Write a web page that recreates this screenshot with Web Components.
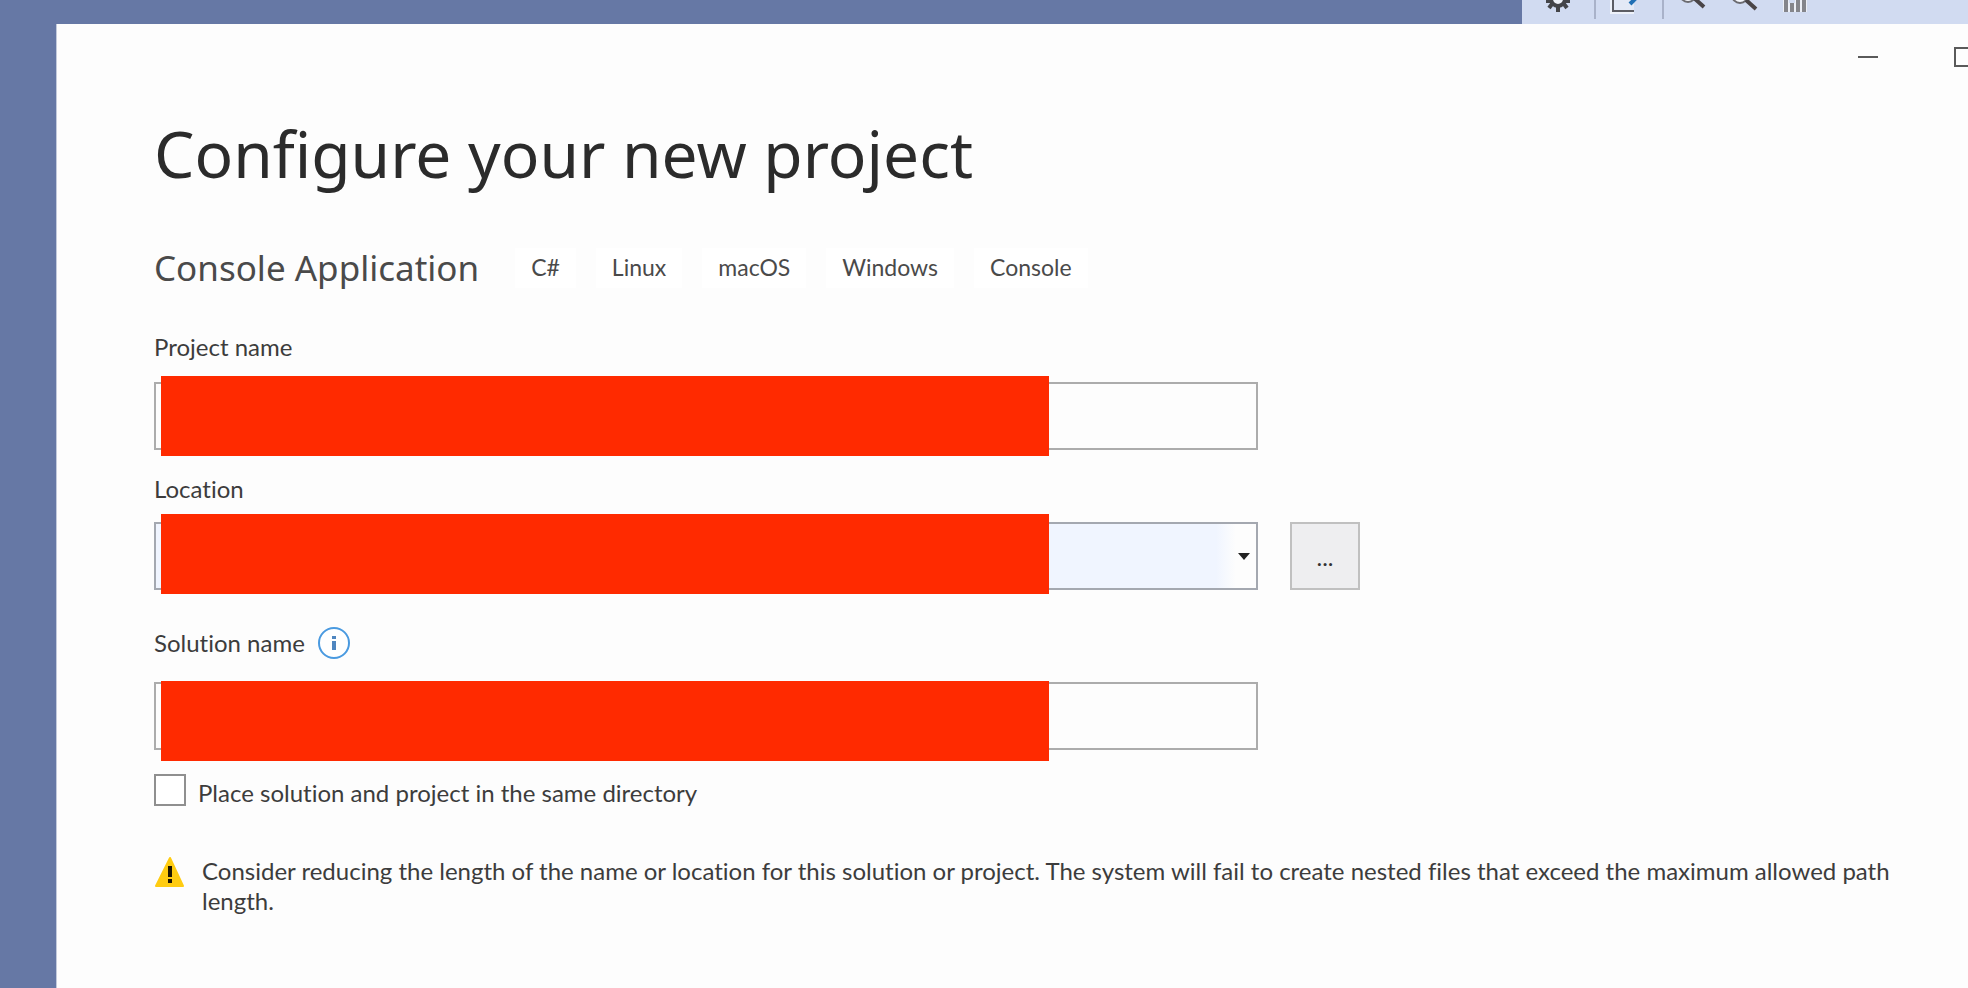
<!DOCTYPE html>
<html lang="en">
<head>
<meta charset="utf-8">
<title>Configure your new project</title>
<style>
  html, body { margin: 0; min-height: 100%; }
  body { background: #6678a5; font-family: Lato, "Noto Sans", sans-serif; font-variant-ligatures: none; color: #2b2b2b; overflow: hidden; }
</style>
</head>
<body>
<ide-shell>
  <ide-toolbar slot="toolbar"></ide-toolbar>
  <project-dialog>
    <dialog-caption slot="caption"></dialog-caption>
    <span slot="title">Configure your new project</span>
    <template-summary>
      <span slot="name">Console Application</span>
      <tag-chip>C#</tag-chip>
      <tag-chip>Linux</tag-chip>
      <tag-chip>macOS</tag-chip>
      <tag-chip>Windows</tag-chip>
      <tag-chip>Console</tag-chip>
    </template-summary>
    <name-field label="Project name" style="--before:39px;--gap:19px;--lift:6px"></name-field>
    <location-field label="Location" style="--before:23px;--gap:17px;--lift:8px"></location-field>
    <name-field label="Solution name" info style="--before:37px;--gap:23px;--lift:1px"></name-field>
    <check-option>Place solution and project in the same directory</check-option>
    <warning-note>Consider reducing the length of the name or location for this solution or project. The system will fail to create nested files that exceed the maximum allowed path length.</warning-note>
  </project-dialog>
</ide-shell>

<script>
const define = (name, html, setup) => customElements.define(name, class extends HTMLElement {
  constructor() {
    super();
    this.attachShadow({ mode: 'open' }).innerHTML = html;
  }
  connectedCallback() { if (setup) setup(this, this.shadowRoot); }
});

define('ide-shell', `
  <style>
    :host { display: flex; flex-direction: column; min-height: 100vh; }
    header { display: flex; justify-content: flex-end; height: 24px; }
    main { flex: 1; display: flex; padding-left: 56px; }
  </style>
  <header><slot name="toolbar"></slot></header>
  <main><slot></slot></main>`);

define('ide-toolbar', `
  <style>
    :host { display: block; width: 446px; height: 24px; background: #d1dbf1; }
    svg { display: block; }
  </style>
  <svg width="446" height="24" viewBox="0 0 446 24" role="img" aria-label="Toolbar">
    <g fill="none" stroke="#444549">
      <circle cx="36" cy="-1" r="7" fill="#eef1f8" stroke-width="4"/>
      <path d="M36 7V12M30 4L27 8M42 4L45 8M28 1H24M44 1H48" stroke-width="4"/>
    </g>
    <path d="M73 0V19M141 0V19" stroke="#a9b2c9" stroke-width="2"/>
    <path d="M91 0V11H112" fill="none" stroke="#eef2fa" stroke-width="6"/>
    <path d="M92 0V10H112V0Z" fill="#e3e9f6"/>
    <path d="M91 0V11H112" fill="none" stroke="#5c5d64" stroke-width="2"/>
    <path d="M108 4L116 -4" stroke="#1f6fb5" stroke-width="4"/>
    <g fill="none">
      <circle cx="166" cy="-6" r="8" fill="#f5f7fc" stroke="#6b6b70" stroke-width="2"/>
      <path d="M172 -2L182 7" stroke="#4a4547" stroke-width="4"/>
      <circle cx="218" cy="-5" r="8" fill="#f5f7fc" stroke="#6b6b70" stroke-width="2"/>
      <path d="M224 0L234 9" stroke="#4a4547" stroke-width="4"/>
    </g>
    <path d="M264 0V12M270 3V12M276 0V12M282 0V12" stroke="#eceff6" stroke-width="6"/>
    <path d="M264 0V12M270 3V12M276 0V12M282 0V12" stroke="#84858b" stroke-width="4"/>
  </svg>`);

define('project-dialog', `
  <style>
    :host { flex: 1; min-width: 0; display: block; background: #fdfdfd; border-left: 1px solid #c3cadc; overflow: hidden; }
    h1 { margin: 20px 0 46px; font-family: "Noto Sans", sans-serif; font-size: 64px; line-height: 88px; font-weight: 400; color: #2b2b2b; }
    section { padding: 0 40px 0 97px; }
  </style>
  <slot name="caption"></slot>
  <section>
    <h1><slot name="title"></slot></h1>
    <slot></slot>
  </section>`);

define('dialog-caption', `
  <style>
    :host { display: flex; justify-content: flex-end; height: 66px; margin-right: -44px; }
    button { width: 96px; border: 0; padding: 0; background: none; display: grid; place-items: center; }
    path, rect { fill: none; stroke: #5a5a5a; stroke-width: 2; }
  </style>
  <button type="button" aria-label="Minimize"><svg width="20" height="20"><path d="M0 10H20"/></svg></button>
  <button type="button" aria-label="Maximize"><svg width="20" height="20"><rect x="1" y="1" width="18" height="18"/></svg></button>`);

define('template-summary', `
  <style>
    :host { display: flex; align-items: center; gap: 20px; height: 48px; }
    h2 { margin: 0 16px 0 0; font-family: "Noto Sans", sans-serif; font-size: 35px; line-height: 48px; font-weight: 400; color: #4a4a4a; white-space: nowrap; }
  </style>
  <h2><slot name="name"></slot></h2><slot></slot>`);

define('tag-chip', `
  <style>
    :host { display: block; padding: 4px 16px 6px; background: #fff; font-size: 23px; line-height: 30px; color: #4a4a4a; white-space: nowrap; }
  </style>
  <slot></slot>`);

const fieldStyle = `
    :host { display: block; margin-top: var(--before); }
    .head { display: flex; align-items: center; gap: 13px; height: 32px; margin-bottom: var(--gap); }
    label { font-size: 24px; line-height: 32px; color: #3c3c3c; }
    .row { display: flex; gap: 32px; }
    .box { position: relative; width: 1104px; height: 68px; }
    input, select { display: block; box-sizing: border-box; width: 100%; height: 100%; margin: 0; border: 2px solid #acacac; border-radius: 0; background: #fdfdfd; padding: 0 12px; font: inherit; font-size: 24px; appearance: none; outline: 0; }
    .mask { position: absolute; left: 7px; top: calc(0px - var(--lift)); width: 888px; height: 80px; background: #ff2a00; }`;

define('name-field', `
  <style>${fieldStyle}
    svg { display: none; }
    :host([info]) svg { display: block; }
  </style>
  <div class="head">
    <label for="field"></label>
    <svg width="32" height="32" viewBox="0 0 32 32" role="img" aria-label="Information">
      <circle cx="16" cy="16" r="15" fill="#fff" stroke="#4a9ae0" stroke-width="2"/>
      <path d="M14 9h4v3h-4zM14 14h4v9h-4z" fill="#4f86c0"/>
    </svg>
  </div>
  <div class="box"><input id="field" type="text"><div class="mask"></div></div>`,
  (host, root) => { root.querySelector('label').textContent = host.getAttribute('label'); });

define('location-field', `
  <style>${fieldStyle}
    select { background: linear-gradient(90deg, #f0f5ff calc(100% - 40px), #fdfdfd calc(100% - 20px)); border-color: #a4a8b0; }
    .arrow { position: absolute; right: 8px; top: 31px; pointer-events: none; }
    button { width: 70px; height: 68px; box-sizing: border-box; padding: 0; border: 2px solid #c0c0c0; background: #eeeef0; color: #333; font: inherit; font-size: 24px; }
  </style>
  <div class="head"><label for="field"></label></div>
  <div class="row">
    <div class="box">
      <select id="field"><option></option></select>
      <svg class="arrow" width="12" height="7"><path d="M0 0H12L6 7Z" fill="#222"/></svg>
      <div class="mask"></div>
    </div>
    <button type="button" aria-label="Browse">...</button>
  </div>`,
  (host, root) => { root.querySelector('label').textContent = host.getAttribute('label'); });

define('check-option', `
  <style>
    :host { display: flex; gap: 12px; margin-top: 24px; height: 32px; }
    input { appearance: none; box-sizing: border-box; width: 32px; height: 32px; margin: 0; border: 2px solid #8f8f8f; background: #fff; }
    label { font-size: 24px; line-height: 32px; color: #3c3c3c; padding-top: 3px; }
  </style>
  <input id="same" type="checkbox"><label for="same"><slot></slot></label>`);

define('warning-note', `
  <style>
    :host { display: flex; gap: 17px; margin-top: 50px; }
    svg { flex: none; }
    p { margin: 0; font-size: 24px; line-height: 30px; color: #3c3c3c; }
  </style>
  <svg width="31" height="32" viewBox="0 0 31 32" role="img" aria-label="Warning">
    <path d="M16 2L29 30H2Z" fill="#fc1" stroke="#fc1" stroke-width="2" stroke-linejoin="round"/>
    <path d="M14 10h4v11h-4zM14 23h4v4h-4z" fill="#1d1500"/>
  </svg>
  <p><slot></slot></p>`);
</script>
</body>
</html>
